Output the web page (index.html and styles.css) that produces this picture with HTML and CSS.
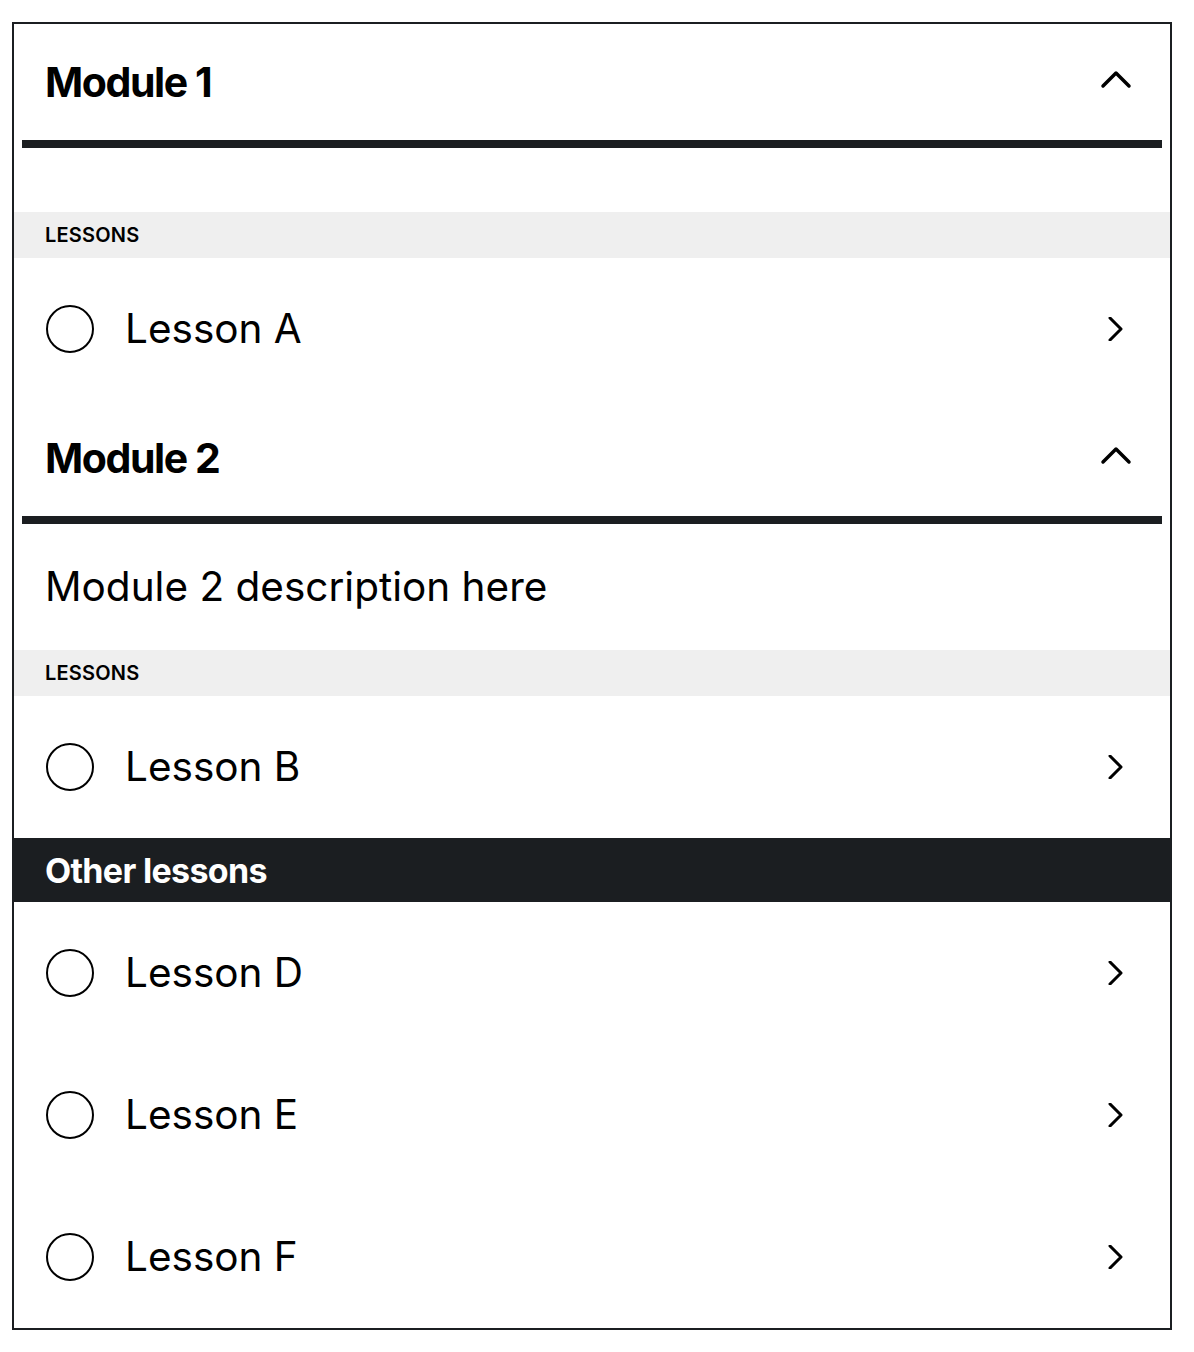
FILE: index.html
```html
<!DOCTYPE html>
<html>
<head>
    <meta charset="utf-8">
    <link rel="stylesheet" href="styles.css">
</head>
<body>
    <div class="course">
        <section class="module">
            <div class="module-head">
                <h2 class="module-title">Module 1</h2>
                <svg class="chevron-up" width="32" height="32" viewBox="0 0 32 32"><path d="M3 20 L16 7 L29 20" fill="none" stroke="#000" stroke-width="3.5" stroke-linecap="round" stroke-linejoin="round"/></svg>
            </div>
            <div class="module-desc"></div>
            <div class="lessons-label">Lessons</div>
            <ul class="lesson-list">
                <li class="lesson">
                    <span class="lesson-check"></span>
                    <span class="lesson-name">Lesson A</span>
                    <svg class="chevron-right" width="24" height="24" viewBox="0 0 24 24"><path d="M6 1 L17 12 L6 23" fill="none" stroke="#000" stroke-width="3" stroke-linecap="round" stroke-linejoin="round"/></svg>
                </li>
            </ul>
        </section>

        <section class="module">
            <div class="module-head">
                <h2 class="module-title">Module 2</h2>
                <svg class="chevron-up" width="32" height="32" viewBox="0 0 32 32"><path d="M3 20 L16 7 L29 20" fill="none" stroke="#000" stroke-width="3.5" stroke-linecap="round" stroke-linejoin="round"/></svg>
            </div>
            <div class="module-desc">Module 2 description here</div>
            <div class="lessons-label">Lessons</div>
            <ul class="lesson-list">
                <li class="lesson">
                    <span class="lesson-check"></span>
                    <span class="lesson-name">Lesson B</span>
                    <svg class="chevron-right" width="24" height="24" viewBox="0 0 24 24"><path d="M6 1 L17 12 L6 23" fill="none" stroke="#000" stroke-width="3" stroke-linecap="round" stroke-linejoin="round"/></svg>
                </li>
            </ul>
        </section>

        <div class="other-head">Other lessons</div>
        <ul class="lesson-list">
            <li class="lesson">
                <span class="lesson-check"></span>
                <span class="lesson-name">Lesson D</span>
                <svg class="chevron-right" width="24" height="24" viewBox="0 0 24 24"><path d="M6 1 L17 12 L6 23" fill="none" stroke="#000" stroke-width="3" stroke-linecap="round" stroke-linejoin="round"/></svg>
            </li>
            <li class="lesson">
                <span class="lesson-check"></span>
                <span class="lesson-name">Lesson E</span>
                <svg class="chevron-right" width="24" height="24" viewBox="0 0 24 24"><path d="M6 1 L17 12 L6 23" fill="none" stroke="#000" stroke-width="3" stroke-linecap="round" stroke-linejoin="round"/></svg>
            </li>
            <li class="lesson">
                <span class="lesson-check"></span>
                <span class="lesson-name">Lesson F</span>
                <svg class="chevron-right" width="24" height="24" viewBox="0 0 24 24"><path d="M6 1 L17 12 L6 23" fill="none" stroke="#000" stroke-width="3" stroke-linecap="round" stroke-linejoin="round"/></svg>
            </li>
        </ul>
    </div>
</body>
</html>
```

FILE: styles.css
```css
* {
    box-sizing: border-box;
}

body {
    margin: 22px 22px 0 12px;
    font-family: Inter, 'Noto Sans', sans-serif;
    color: #000;
    background: #fff;
}

.course {
    border: 2px solid #1b1e21;
}

.module-head {
    margin: 0 8px;
    height: 124px;
    padding: 0 30px 0 23px;
    display: flex;
    align-items: center;
    justify-content: space-between;
    border-bottom: 8px solid #1b1e21;
}

.module-title {
    margin: 0;
    font-size: 41px;
    font-weight: 700;
    letter-spacing: -0.035em;
    line-height: 1;
}

.module-desc {
    padding: 32px 31px;
    font-size: 40.5px;
    line-height: 62px;
}

.module-desc:empty {
    height: 64px;
}

.lessons-label {
    background: #efefef;
    height: 46px;
    padding: 0 31px;
    display: flex;
    align-items: center;
    font-size: 20px;
    font-weight: 600;
    text-transform: uppercase;
    letter-spacing: 0.01em;
}

.lesson-list {
    list-style: none;
    margin: 0;
    padding: 0;
}

.lesson {
    height: 142px;
    padding: 0 42px 0 32px;
    display: flex;
    align-items: center;
    gap: 31px;
}

.lesson-check {
    width: 48px;
    height: 48px;
    border: 2px solid #000;
    border-radius: 50%;
    flex-shrink: 0;
}

.lesson-name {
    flex: 1;
    font-size: 40.5px;
    line-height: 1;
}

.other-head {
    background: #1b1e21;
    color: #fff;
    height: 64px;
    padding: 0 31px;
    display: flex;
    align-items: center;
    font-size: 34px;
    font-weight: 700;
    letter-spacing: -0.02em;
}
```
